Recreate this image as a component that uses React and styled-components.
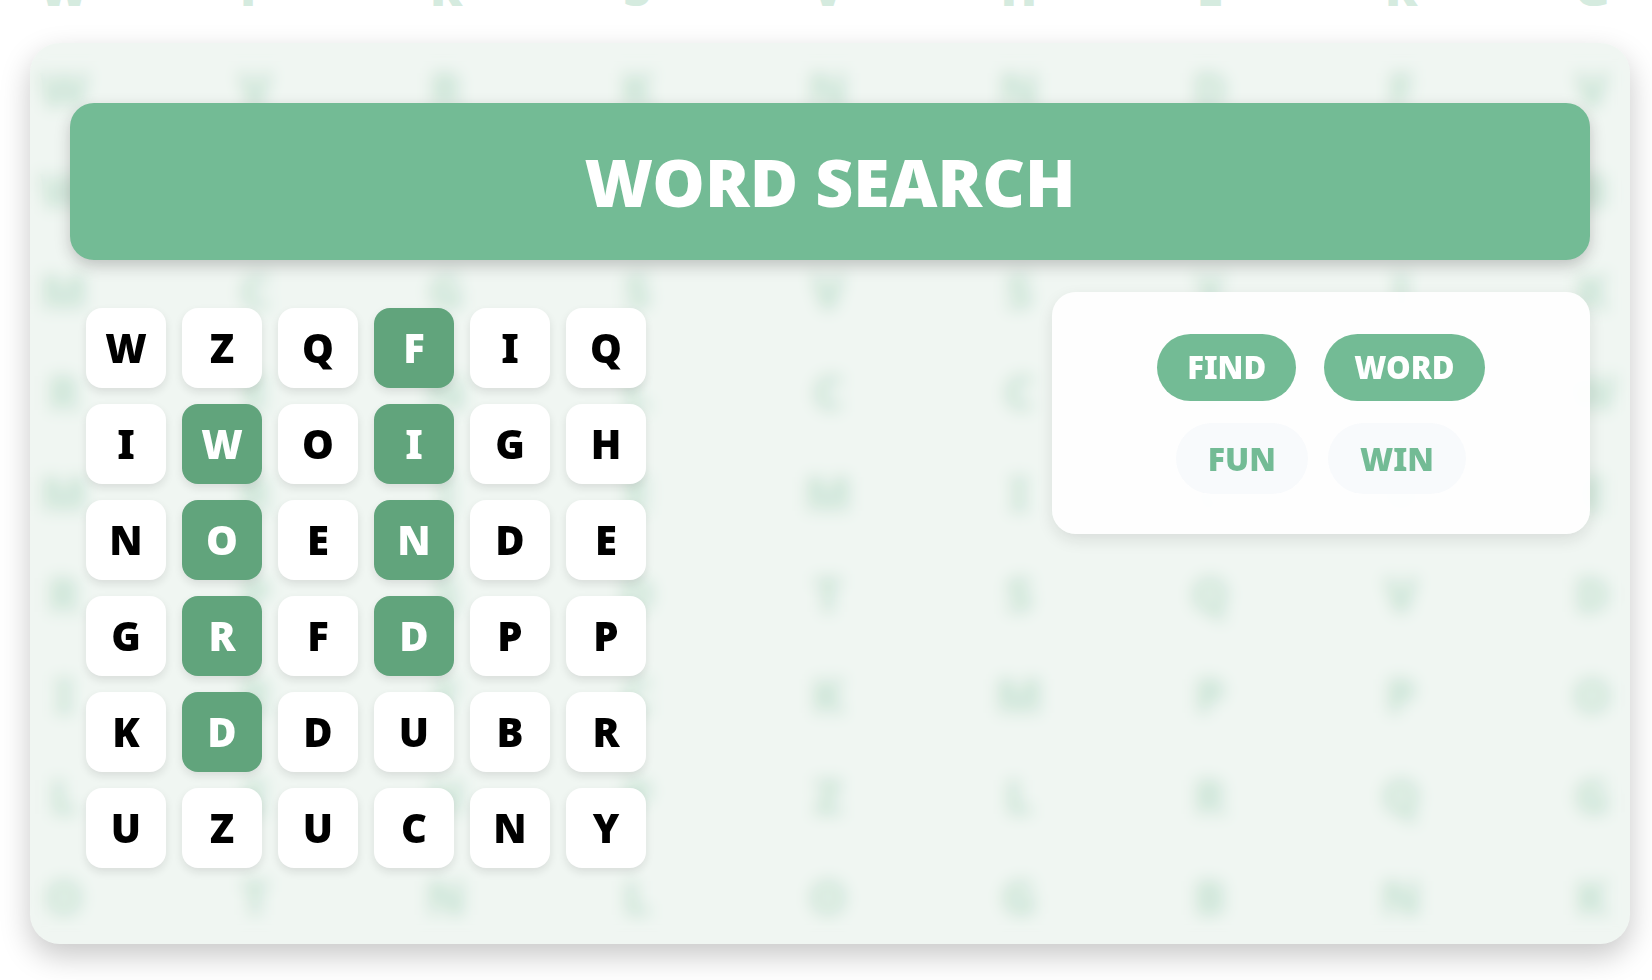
import React from "react"
import styled, { createGlobalStyle } from "styled-components"

const GlobalStyle = createGlobalStyle`
  * {
    box-sizing: border-box;
  }
  body {
    margin: 0;
    background: #fff;
    font-family: "Noto Sans", "Open Sans", sans-serif;
  }
`

const Page = styled.div`
  position: relative;
  min-height: 100vh;
  padding: 43px 22px 36px 30px;
  overflow: hidden;
`

const Backdrop = styled.div`
  position: absolute;
  top: -63px;
  left: 0;
  right: 0;
  display: grid;
  grid-auto-rows: 101px;
  padding: 0 30px 0 34px;
  pointer-events: none;
`

const BackdropRow = styled.div`
  display: flex;
  align-items: center;
  justify-content: space-between;
`

const BackdropLetter = styled.span`
  width: 60px;
  color: #d5ebdf;
  font-size: 48px;
  font-weight: 900;
  line-height: 64px;
  text-align: center;
`

const Card = styled.main`
  position: relative;
  padding: 60px 40px;
  border-radius: 30px;
  background: rgba(105, 165, 125, 0.1);
  box-shadow: 0 12px 30px rgba(0, 0, 0, 0.22);
  backdrop-filter: blur(8px);
`

const Header = styled.header`
  margin-bottom: 32px;
  padding: 40px;
  border-radius: 24px;
  background: #73bb95;
  box-shadow: 0 6px 16px rgba(0, 0, 0, 0.21);
`

const Title = styled.h1`
  margin: 0;
  color: #fff;
  font-size: 66px;
  font-weight: 900;
  line-height: 77px;
  text-align: center;
`

const Game = styled.div`
  display: grid;
  grid-template-columns: 7fr 4fr;
  gap: 40px;
  align-items: start;
`

const Board = styled.div`
  display: grid;
  grid-template-columns: repeat(6, 80px);
  grid-auto-rows: 80px;
  gap: 16px;
  padding: 16px;
`

const Tile = styled.button`
  padding: 0;
  border: 0;
  border-radius: 16px;
  background: ${p => (p.$found ? "#61a47c" : "#fff")};
  color: ${p => (p.$found ? "#fff" : "#000")};
  box-shadow: 0 4px 8px rgba(0, 0, 0, 0.1);
  font-family: inherit;
  font-size: 40px;
  font-weight: 900;
  line-height: 48px;
  cursor: pointer;
`

const WordList = styled.ul`
  display: flex;
  flex-wrap: wrap;
  justify-content: center;
  gap: 20px;
  margin: 0;
  padding: 40px 80px;
  border-radius: 24px;
  background: rgba(255, 255, 255, 0.95);
  box-shadow: 0 6px 16px rgba(0, 0, 0, 0.1);
  list-style: none;
`

const Word = styled.li`
  margin: ${p => (p.$found ? "2px 4px" : "0")};
  padding: ${p => (p.$found ? "14px 30px" : "16px 32px")};
  border-radius: 36px;
  background: ${p => (p.$found ? "#73bb95" : "#f8fafc")};
  color: ${p => (p.$found ? "#fff" : "#73bb95")};
  font-size: ${p => (p.$found ? "31px" : "32px")};
  font-weight: 900;
  line-height: 39px;
`

// the row behind the header only shows at its two ends
const backdrop = [
  "WPRSVHERG",
  "WVRKNNDFV",
  "W       B",
  "MCGSVSYIK",
  "RENLCCBDW",
  "MRIEMILOE",
  "RPSDTSQVD",
  "IRFCKMPPO",
  "LEHPZLRQG",
  "OTNLOGBNK",
]

const letters = ["WZQFIQ", "IWOIGH", "NOENDE", "GRFDPP", "KDDUBR", "UZUCNY"]

// row-column keys of the tiles that belong to a found word
const foundTiles = ["0-3", "1-3", "2-3", "3-3", "1-1", "2-1", "3-1", "4-1"]

const words = [
  { text: "FIND", found: true },
  { text: "WORD", found: true },
  { text: "FUN", found: false },
  { text: "WIN", found: false },
]

const App = () => (
  <Page>
    <GlobalStyle />
    <Backdrop aria-hidden="true">
      {backdrop.map((row, y) => (
        <BackdropRow key={`bg${y}`}>
          {row.split("").map((letter, x) => (
            <BackdropLetter key={`bg${y}-${x}`}>{letter}</BackdropLetter>
          ))}
        </BackdropRow>
      ))}
    </Backdrop>

    <Card>
      <Header>
        <Title>WORD SEARCH</Title>
      </Header>
      <Game>
        <Board>
          {letters.map((row, y) =>
            row.split("").map((letter, x) => (
              <Tile key={`${y}-${x}`} $found={foundTiles.includes(`${y}-${x}`)}>
                {letter}
              </Tile>
            ))
          )}
        </Board>
        <WordList>
          {words.map(({ text, found }) => (
            <Word key={text} $found={found}>{text}</Word>
          ))}
        </WordList>
      </Game>
    </Card>
  </Page>
)

export default App
